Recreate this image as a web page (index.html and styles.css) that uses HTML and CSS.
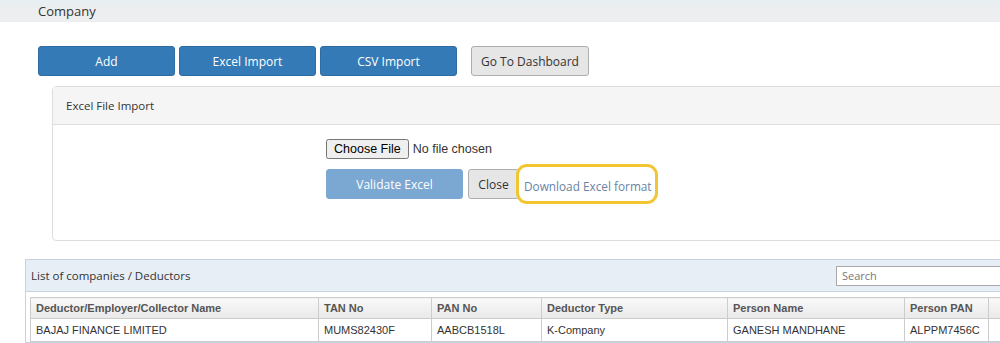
FILE: index.html
```html
<!DOCTYPE html>
<html lang="en">
<head>
    <meta charset="UTF-8">
    <title>Company</title>
    <link rel="stylesheet" href="styles.css">
</head>
<body>

    <div class="page-title">Company</div>

    <div class="content">
        <div class="action-bar">
            <button class="btn btn-primary btn-wide">Add</button>
            <button class="btn btn-primary btn-wide">Excel Import</button>
            <button class="btn btn-primary btn-wide">CSV Import</button>
            <button class="btn btn-default btn-dash">Go To Dashboard</button>
        </div>

        <!-- Excel import panel -->
        <div class="import-panel">
            <div class="import-heading">Excel File Import</div>
            <div class="import-body">
                <input type="file" class="file-input">
                <div class="import-actions">
                    <button class="btn btn-primary btn-disabled btn-wide">Validate Excel</button>
                    <button class="btn btn-default btn-close">Close</button>
                    <a href="#" class="download-link">Download Excel format</a>
                </div>
            </div>
        </div>
    </div>

    <!-- Company list -->
    <div class="list-panel">
        <div class="list-heading">
            <span>List of companies / Deductors</span>
            <input type="text" class="search-box" placeholder="Search">
        </div>
        <table class="company-table">
            <thead>
                <tr>
                    <th class="col-name">Deductor/Employer/Collector Name</th>
                    <th class="col-tan">TAN No</th>
                    <th class="col-pan">PAN No</th>
                    <th class="col-type">Deductor Type</th>
                    <th class="col-person">Person Name</th>
                    <th class="col-ppan">Person PAN</th>
                    <th></th>
                </tr>
            </thead>
            <tbody>
                <tr>
                    <td>BAJAJ FINANCE LIMITED</td>
                    <td>MUMS82430F</td>
                    <td>AABCB1518L</td>
                    <td>K-Company</td>
                    <td>GANESH MANDHANE</td>
                    <td>ALPPM7456C</td>
                    <td></td>
                </tr>
            </tbody>
        </table>
    </div>

</body>
</html>
```

FILE: styles.css
```css
body {
    margin: 0;
    font-family: 'Open Sans', sans-serif;
    color: #333;
    background: #fff;
    overflow: hidden;
}

.page-title {
    height: 22px;
    line-height: 22px;
    padding-left: 38px;
    font-size: 13px;
    color: #333;
    background: linear-gradient(#e6f0f4, #eceef0 30%);
}

.content {
    padding-left: 38px;
}

.action-bar {
    display: flex;
    margin-top: 24px;
}

.btn {
    font-family: 'Open Sans', sans-serif;
    font-size: 12px;
    height: 30px;
    border-radius: 3px;
    cursor: pointer;
    padding: 0 12px;
    margin-right: 4px;
}

.btn-primary {
    background: #337ab7;
    border: 1px solid #2e6da4;
    color: #fff;
}

.btn-wide {
    width: 137px;
}

.btn-default {
    background: #e6e6e6;
    border: 1px solid #adadad;
    color: #333;
}

.btn-dash {
    width: 118px;
    margin-left: 10px;
    padding: 0;
}

.btn-disabled {
    background: #7ba7d3;
    border-color: #7ba7d3;
}

.btn-close {
    width: 51px;
    padding: 0;
    margin-left: 1px;
    margin-right: 0;
}

/* Import panel */
.import-panel {
    margin: 10px 0 0 14px;
    width: 960px;
    height: 153px;
    border: 1px solid #ddd;
    border-radius: 4px;
}

.import-heading {
    height: 37px;
    line-height: 37px;
    padding-left: 13px;
    font-size: 11.5px;
    background: #f5f5f5;
    border-bottom: 1px solid #ddd;
}

.import-body {
    padding: 11px 0 0 273px;
}

.file-input {
    font-family: 'Liberation Sans', Arial, sans-serif;
    font-size: 12.5px;
    height: 20px;
}

.import-actions {
    display: flex;
    align-items: center;
    margin-top: 10px;
}

.download-link {
    position: relative;
    margin-left: 5px;
    font-size: 11.8px;
    color: #6784a6;
    text-decoration: none;
    padding-top: 4px;
}

/* yellow marker drawn over the link */
.download-link::after {
    content: '';
    position: absolute;
    left: -8px;
    right: -6px;
    top: -10px;
    bottom: -10px;
    border: 3px solid #f2c631;
    border-radius: 11px;
}

/* Company list */
.list-panel {
    margin: 18px 0 0 25px;
    width: 990px;
    border: 1px solid #c5d3e2;
    border-right: none;
}

.list-heading {
    display: flex;
    justify-content: space-between;
    align-items: center;
    height: 31px;
    padding-left: 5px;
    font-size: 11.5px;
    background: #e8eef6;
    border-bottom: 1px solid #c5d3e2;
}

.search-box {
    width: 164px;
    height: 16px;
    margin-right: 4px;
    border: 1px solid #aaa;
    font-family: 'Open Sans', sans-serif;
    font-size: 11px;
    padding: 1px 5px;
}

.search-box::placeholder {
    color: #777;
}

.company-table {
    margin: 5px 0 0 4px;
    border-collapse: collapse;
    width: 990px;
    font-family: 'Liberation Sans', Arial, sans-serif;
    font-size: 11px;
}

.company-table th {
    height: 20px;
    padding: 0 5px;
    text-align: left;
    color: #555;
    font-weight: bold;
    background: linear-gradient(#f9f9f9, #e9e9e9);
    border: 1px solid #ccc;
    border-right: none;
}

.company-table td {
    height: 22px;
    padding: 0 5px;
    border: 1px solid #ccc;
    color: #333;
}

.col-name { width: 277px; }
.col-tan { width: 102px; }
.col-pan { width: 99px; }
.col-type { width: 175px; }
.col-person { width: 166px; }
.col-ppan { width: 73px; }
```
